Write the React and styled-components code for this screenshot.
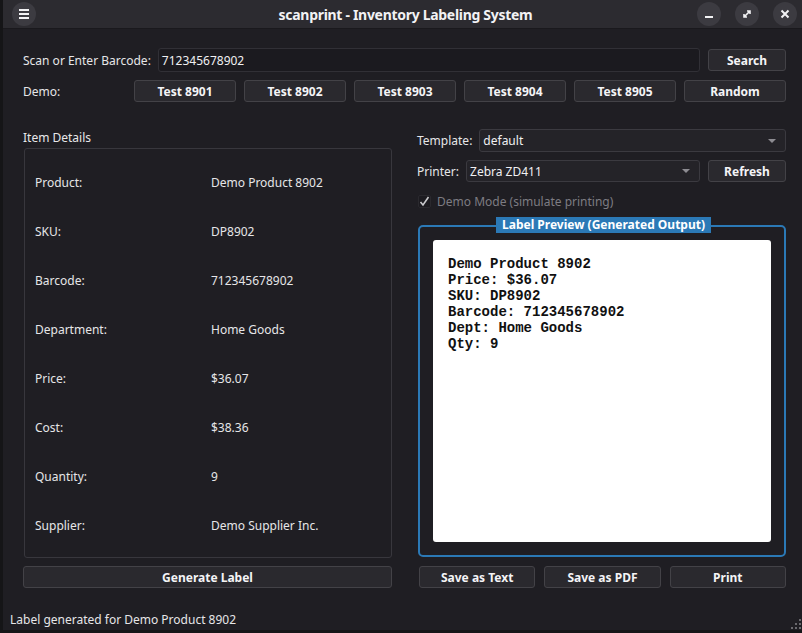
import React from 'react'
import styled, { createGlobalStyle } from 'styled-components'

const Global = createGlobalStyle`
  html, body { margin:0; padding:0; background:#161618; }
  body { font-family:"Noto Sans", "DejaVu Sans", sans-serif; font-size:12px; color:#e8e8ea; }
  * { box-sizing:border-box; }
`;

const Window = styled.div`
  width:802px;
  height:633px;
  display:flex;
  flex-direction:column;
  background:#1f1e23;
  border-left:3px solid #151517;
  border-bottom:3px solid #151517;
  overflow:hidden;
`;

const TitleBar = styled.div`
  height:29px;
  flex:none;
  background:#2c2b30;
  display:flex;
  align-items:center;
  padding:0 5px 0 9px;
  border-bottom:1px solid #1a191d;
`;

const TitleText = styled.div`
  flex:1;
  text-align:center;
  font-weight:700;
  font-size:14px;
  letter-spacing:-0.3px;
  color:#f2f2f4;
  padding-left:78px;
`;

const WinButtons = styled.div`
  display:flex;
  gap:14px;
`;

const RoundBtn = styled.div`
  width:24px;
  height:24px;
  border-radius:50%;
  background:#3c3b41;
  display:flex;
  align-items:center;
  justify-content:center;
  color:#f2f2f4;
`;

const Main = styled.div`
  flex:1;
  display:flex;
  flex-direction:column;
  padding:19px 16px 15px 20px;
  min-height:0;
`;

const BarcodeRow = styled.div`
  display:flex;
  align-items:center;
  height:24px;
`;

const Label = styled.span`
  color:${p => p.$dim ? '#7d7c82' : '#e6e6e8'};
  white-space:nowrap;
`;

const TextInput = styled.div`
  flex:1;
  height:24px;
  margin:0 8px 0 7px;
  background:#1b1a1f;
  border:1px solid #313036;
  border-radius:3px;
  padding:0 6px 0 3px;
  display:flex;
  align-items:center;
  color:#f0f0f2;
`;

const Button = styled.div`
  width:${p => p.$w || 'auto'};
  height:22px;
  flex:none;
  background:#2a292e;
  border:1px solid #434247;
  border-radius:3px;
  display:flex;
  align-items:center;
  justify-content:center;
  font-weight:700;
  color:#f4f4f6;
`;

const DemoRow = styled.div`
  display:grid;
  grid-template-columns:103px repeat(6, 1fr);
  column-gap:8px;
  margin-top:8px;
  align-items:center;
`;

const Columns = styled.div`
  flex:1;
  display:grid;
  grid-template-columns:369px 369px;
  column-gap:25px;
  margin-top:27px;
  min-height:0;
`;

const Column = styled.div`
  display:flex;
  flex-direction:column;
  min-height:0;
`;

const SectionTitle = styled.div`
  height:17px;
  line-height:17px;
`;

const GroupBox = styled.div`
  flex:1;
  margin:2px 0 8px 1px;
  border:1px solid #38373d;
  border-radius:3px;
  padding:9px 10px 7px;
  display:grid;
  grid-template-columns:176px 1fr;
  grid-auto-rows:49px;
  align-items:center;
`;

const FieldRow = styled.div`
  display:flex;
  align-items:center;
  gap:8px;
  height:${p => p.$h || '22px'};
  margin-bottom:8px;
`;

const Combo = styled.div`
  flex:1;
  height:100%;
  background:#242328;
  border:1px solid #3b3a40;
  border-radius:3px;
  display:flex;
  align-items:center;
  padding:0 9px 0 3px;
  margin-left:-1px;
  color:#f0f0f2;
  & > span { flex:1; }
`;

const Arrow = styled.i`
  width:0;
  height:0;
  border-left:4px solid transparent;
  border-right:4px solid transparent;
  border-top:4px solid #8d8c92;
`;

const CheckRow = styled.div`
  display:flex;
  align-items:center;
  gap:6px;
  height:16px;
  margin:3px 0 0 1px;
`;

const CheckBox = styled.div`
  width:13px;
  height:13px;
  border:1px solid #2a292e;
  background:#1c1b20;
  border-radius:2px;
  display:flex;
  align-items:center;
  justify-content:center;
`;

const PreviewGroup = styled.div`
  position:relative;
  flex:1;
  margin:16px 0 9px 1px;
  border:2px solid #2b79b6;
  border-radius:5px;
  padding:13px;
  display:flex;
  min-height:0;
`;

const Legend = styled.div`
  position:absolute;
  top:-10px;
  left:76px;
  height:16px;
  padding:0 6px;
  background:#2b79b6;
  color:#fff;
  font-weight:700;
  line-height:16px;
`;

const Paper = styled.pre`
  flex:1;
  margin:0;
  background:#fff;
  border-radius:3px;
  padding:16px 15px;
  font-family:"Liberation Mono", "Courier New", monospace;
  font-weight:700;
  font-size:14px;
  line-height:16px;
  color:#111;
`;

const ActionRow = styled.div`
  display:grid;
  grid-template-columns:repeat(3, 1fr);
  column-gap:9px;
  margin-left:2px;
`;

const StatusBar = styled.div`
  height:27px;
  flex:none;
  position:relative;
  padding:9px 0 0 7px;
  color:#e6e6e8;
  line-height:16px;
`;

const Grip = styled.svg`
  position:absolute;
  right:1px;
  bottom:1px;
`;

const details = [
  ['Product:', 'Demo Product 8902'],
  ['SKU:', 'DP8902'],
  ['Barcode:', '712345678902'],
  ['Department:', 'Home Goods'],
  ['Price:', '$36.07'],
  ['Cost:', '$38.36'],
  ['Quantity:', '9'],
  ['Supplier:', 'Demo Supplier Inc.'],
];

const label = `Demo Product 8902
Price: $36.07
SKU: DP8902
Barcode: 712345678902
Dept: Home Goods
Qty: 9`;

export default function App() {
  return (
    <Window>
      <Global />
      <TitleBar>
        <RoundBtn>
          <svg width="12" height="12" viewBox="0 0 12 12"><path d="M1 2h10M1 6h10M1 10h10" stroke="#f2f2f4" strokeWidth="2" /></svg>
        </RoundBtn>
        <TitleText>scanprint - Inventory Labeling System</TitleText>
        <WinButtons>
          <RoundBtn>
            <svg width="12" height="12" viewBox="0 0 12 12"><path d="M2 9h8" stroke="#f2f2f4" strokeWidth="2" /></svg>
          </RoundBtn>
          <RoundBtn>
            <svg width="12" height="12" viewBox="0 0 12 12"><path d="M3 9l6-6M6 3h3v3M3 6v3h3" stroke="#f2f2f4" strokeWidth="1.6" fill="none" /></svg>
          </RoundBtn>
          <RoundBtn>
            <svg width="12" height="12" viewBox="0 0 12 12"><path d="M2.5 2.5l7 7M9.5 2.5l-7 7" stroke="#f2f2f4" strokeWidth="2" /></svg>
          </RoundBtn>
        </WinButtons>
      </TitleBar>

      <Main>
        <BarcodeRow>
          <Label>Scan or Enter Barcode:</Label>
          <TextInput>712345678902</TextInput>
          <Button $w="78px">Search</Button>
        </BarcodeRow>
        <DemoRow>
          <Label>Demo:</Label>
          {['Test 8901', 'Test 8902', 'Test 8903', 'Test 8904', 'Test 8905', 'Random'].map(t => (
            <Button key={t}>{t}</Button>
          ))}
        </DemoRow>

        <Columns>
          <Column>
            <SectionTitle>Item Details</SectionTitle>
            <GroupBox>
              {details.map(([k, v]) => (
                <React.Fragment key={k}>
                  <Label>{k}</Label>
                  <Label>{v}</Label>
                </React.Fragment>
              ))}
            </GroupBox>
            <Button>Generate Label</Button>
          </Column>

          <Column>
            <FieldRow $h="23px">
              <Label>Template:</Label>
              <Combo><span>default</span><Arrow /></Combo>
            </FieldRow>
            <FieldRow>
              <Label>Printer:</Label>
              <Combo><span>Zebra ZD411</span><Arrow /></Combo>
              <Button $w="78px">Refresh</Button>
            </FieldRow>
            <CheckRow>
              <CheckBox>
                <svg width="11" height="11" viewBox="0 0 11 11"><path d="M1.5 6l2.5 3 5.5-8" stroke="#c9c9cc" strokeWidth="1.6" fill="none" /></svg>
              </CheckBox>
              <Label $dim>Demo Mode (simulate printing)</Label>
            </CheckRow>
            <PreviewGroup>
              <Legend>Label Preview (Generated Output)</Legend>
              <Paper>{label}</Paper>
            </PreviewGroup>
            <ActionRow>
              <Button>Save as Text</Button>
              <Button>Save as PDF</Button>
              <Button>Print</Button>
            </ActionRow>
          </Column>
        </Columns>
      </Main>

      <StatusBar>
        Label generated for Demo Product 8902
        <Grip width="10" height="10" viewBox="0 0 10 10">
          <g fill="#6a696e">
            <rect x="8" y="0" width="2" height="2" />
            <rect x="4" y="4" width="2" height="2" />
            <rect x="8" y="4" width="2" height="2" />
            <rect x="0" y="8" width="2" height="2" />
            <rect x="4" y="8" width="2" height="2" />
            <rect x="8" y="8" width="2" height="2" />
          </g>
        </Grip>
      </StatusBar>
    </Window>
  )
}
